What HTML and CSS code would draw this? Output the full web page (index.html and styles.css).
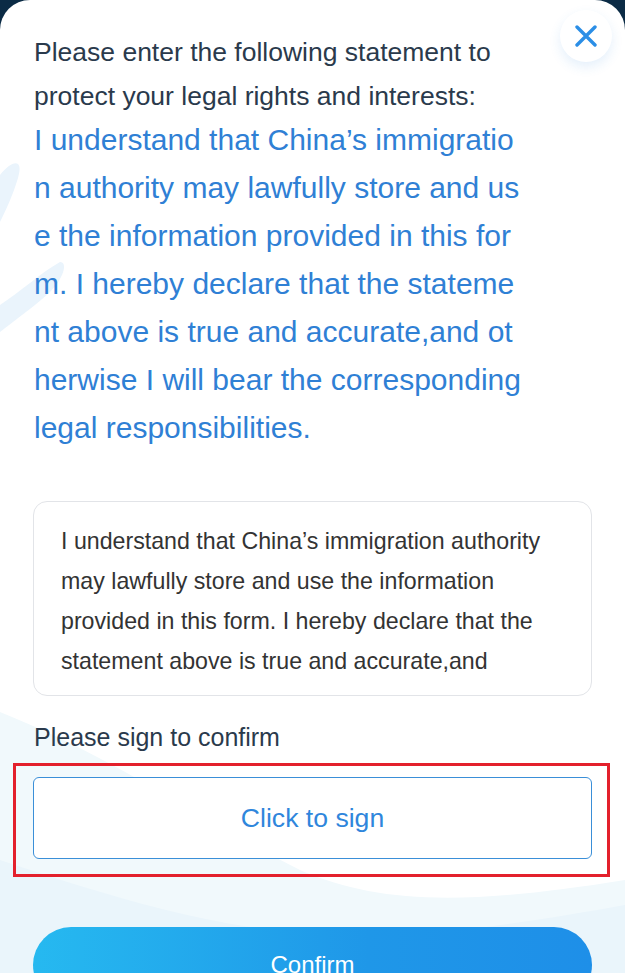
FILE: index.html
```html
<!DOCTYPE html>
<html lang="en">
<head>
<meta charset="utf-8">
<title>Statement</title>
<link rel="stylesheet" href="styles.css">
</head>
<body>
<div class="card">
  <svg class="deco" width="625" height="973" viewBox="0 0 625 973" aria-hidden="true">
    <path d="M0 175 C 12 160, 24 158, 18 178 C 13 195, 5 212, 0 222 Z" fill="#eaf4fc"/>
    <path d="M0 305 C 20 292, 42 272, 60 262 C 68 262, 64 278, 50 292 C 35 306, 15 320, 0 332 Z" fill="#eaf4fc"/>
    <path d="M0 712 C 120 760, 200 820, 300 870 C 380 905, 470 905, 625 880 L625 973 L0 973 Z" fill="#f1f9fc"/>
    <path d="M0 860 C 120 900, 220 930, 330 935 C 440 938, 540 920, 625 905 L625 973 L0 973 Z" fill="#eaf5fb"/>
  </svg>
  <button class="close" type="button" aria-label="Close">
    <svg width="22" height="22" viewBox="0 0 22 22"><path d="M2 2 L20 20 M20 2 L2 20" stroke="#2b8ee6" stroke-width="3.4" stroke-linecap="round" fill="none"/></svg>
  </button>
  <div class="content">
    <p class="lead">Please enter the following statement to protect your legal rights and interests:</p>
    <p class="statement">I understand that China’s immigration authority may lawfully store and use the information provided in this form. I hereby declare that the statement above is true and accurate,and otherwise I will bear the corresponding legal responsibilities.</p>
    <div class="input-box">
      <textarea class="input-text" readonly>I understand that China’s immigration authority may lawfully store and use the information provided in this form. I hereby declare that the statement above is true and accurate,and otherwise I will bear the corresponding legal responsibilities.</textarea>
    </div>
    <p class="sign-label">Please sign to confirm</p>
    <div class="sign-wrap">
      <div class="sign-box">Click to sign</div>
      <div class="highlight"></div>
    </div>
    <button class="confirm" type="button">Confirm</button>
  </div>
</div>
</body>
</html>
```

FILE: styles.css
```css
html, body {
  margin: 0;
  padding: 0;
}
body {
  background: #0b2b45;
  font-family: "Liberation Sans", Arial, sans-serif;
  width: 625px;
  height: 973px;
  overflow: hidden;
}
.card {
  position: relative;
  background: #ffffff;
  border-radius: 30px 30px 0 0;
  height: 973px;
  overflow: hidden;
}
.deco {
  position: absolute;
  left: 0;
  top: 0;
}
.close {
  position: absolute;
  top: 10px;
  left: 560px;
  width: 52px;
  height: 52px;
  border-radius: 50%;
  border: none;
  background: #ffffff;
  box-shadow: 0 5px 12px rgba(40, 130, 220, 0.12);
  display: flex;
  align-items: center;
  justify-content: center;
  padding: 0;
}
.content {
  position: relative;
  padding: 30px 33px 0 34px;
  display: flex;
  flex-direction: column;
}
.lead {
  margin: 0;
  font-size: 26.5px;
  line-height: 44px;
  color: #2a3a4c;
  width: 480px;
}
.statement {
  margin: -2px 0 0;
  font-size: 30px;
  line-height: 48px;
  color: #2f80d5;
  width: 490px;
  word-break: break-all;
}
.input-box {
  margin-top: 49px;
  margin-left: -1px;
  box-sizing: border-box;
  width: 559px;
  height: 195px;
  border: 1px solid #e2e4e8;
  border-radius: 14px;
  background: #ffffff;
  padding: 19px 28px 0 27px;
}
.input-text {
  display: block;
  width: 100%;
  height: 160px;
  margin: 0;
  padding: 0;
  border: none;
  outline: none;
  resize: none;
  overflow: hidden;
  background: transparent;
  font-family: "Liberation Sans", Arial, sans-serif;
  font-size: 23.2px;
  line-height: 40px;
  color: #333333;
}
.sign-label {
  margin: 21px 0 0;
  font-size: 25px;
  line-height: 40px;
  color: #2a3a4c;
}
.sign-wrap {
  position: relative;
  margin-top: 20px;
  margin-left: -1px;
}
.sign-box {
  box-sizing: border-box;
  width: 559px;
  height: 82px;
  border: 1px solid #3a8fd8;
  border-radius: 6px;
  background: #ffffff;
  display: flex;
  align-items: center;
  justify-content: center;
  font-size: 26.6px;
  color: #2f86dc;
}
.highlight {
  position: absolute;
  left: -20px;
  top: -14px;
  width: 597px;
  height: 114px;
  box-sizing: border-box;
  border: 3px solid #e3202c;
}
.confirm {
  margin-top: 68px;
  margin-left: -1px;
  width: 559px;
  height: 76px;
  border: none;
  border-radius: 38px;
  background: linear-gradient(90deg, #26b9f0 0%, #1f97e8 60%, #1e8fe8 100%);
  color: #ffffff;
  font-family: "Liberation Sans", Arial, sans-serif;
  font-size: 24px;
  padding: 0;
}
```
